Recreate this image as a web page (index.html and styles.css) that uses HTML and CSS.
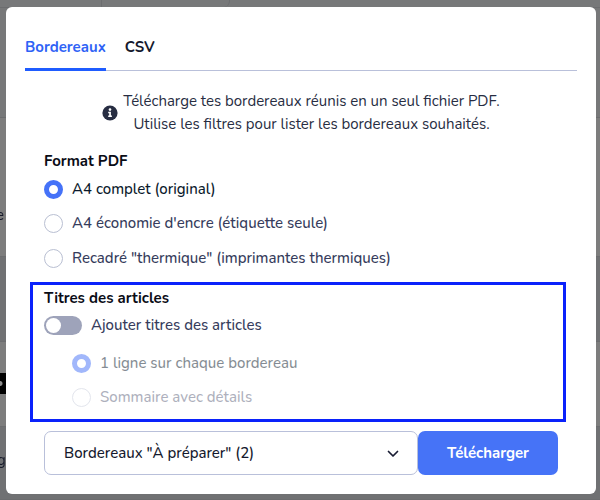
FILE: index.html
```
<!DOCTYPE html>
<html lang="fr">
<head>
    <meta charset="UTF-8">
    <meta name="viewport" content="width=device-width, initial-scale=1.0">
    <title>Bordereaux</title>
    <link rel="stylesheet" href="styles.css">
</head>
<body>
<!-- Dimmed page behind the dialog -->
<div class="backdrop" aria-hidden="true">
    <div class="row row-top"><span class="tab-cell"></span><span class="tab-cell tab-last"></span></div>
    <div class="row row-head"></div>
    <div class="row row-line"></div>
    <div class="row row-item">e</div>
    <div class="row row-alt"></div>
    <div class="row row-tag"><span class="tag"></span></div>
    <div class="row row-alt row-last">g</div>
</div>

<form class="modal" role="dialog" aria-label="Bordereaux">
    <nav class="tabs">
        <a class="tab active" href="#bordereaux">Bordereaux</a>
        <a class="tab" href="#csv">CSV</a>
    </nav>

    <div class="info">
        <svg class="info-icon" viewBox="0 0 16 16" width="16" height="16">
            <circle cx="8" cy="8" r="7.6" fill="#272d42"/>
            <circle cx="8" cy="4.6" r="1.3" fill="#fff"/>
            <path d="M6.2 6.8h2.7v3.7h1v1.5H6.2v-1.5h1V8.3h-1z" fill="#fff"/>
        </svg>
        <p>Télécharge tes bordereaux réunis en un seul fichier PDF.<br>Utilise les filtres pour lister les bordereaux souhaités.</p>
    </div>

    <fieldset class="group">
        <legend>Format PDF</legend>
        <label class="option"><input type="radio" name="format" checked><span>A4 complet (original)</span></label>
        <label class="option"><input type="radio" name="format"><span>A4 économie d'encre (étiquette seule)</span></label>
        <label class="option"><input type="radio" name="format"><span>Recadré "thermique" (imprimantes thermiques)</span></label>
    </fieldset>

    <fieldset class="group highlight">
        <legend>Titres des articles</legend>
        <label class="switch"><input type="checkbox" role="switch"><span>Ajouter titres des articles</span></label>
        <div class="nested">
            <label class="option"><input type="radio" name="titles" checked disabled><span>1 ligne sur chaque bordereau</span></label>
            <label class="option"><input type="radio" name="titles" disabled><span>Sommaire avec détails</span></label>
        </div>
    </fieldset>

    <div class="actions">
        <div class="select">
            <select aria-label="Filtre des bordereaux">
                <option>Bordereaux "À préparer" (2)</option>
            </select>
            <svg class="chevron" viewBox="0 0 12 8" width="12" height="8">
                <path d="M1.5 1.5 6 6l4.500-4.500" fill="none" stroke="#181c33" stroke-width="1.700" stroke-linecap="round" stroke-linejoin="round"/>
            </svg>
        </div>
        <button class="submit" type="submit">Télécharger</button>
    </div>
</form>
</body>
</html>
```
FILE: styles.css
```
html, body {
    height: 100%;
    margin: 0;
}

body {
    box-sizing: border-box;
    padding: 7px 4px 6px 6px;
    font-family: "Nunito", "Noto Sans", sans-serif;
    font-size: 15px;
    line-height: 23px;
    color: #272d42;
    background: #777879;
    overflow: hidden;
}

/* Page behind the dialog */
.backdrop {
    position: fixed;
    inset: 0;
    display: flex;
    flex-direction: column;
    color: #15192a;
}

.row {
    box-sizing: border-box;
    border-bottom: 1px solid #6c6d6f;
    flex: none;
}

.row-top {
    display: flex;
    height: 8px;
}

.tab-cell {
    width: 101px;
    border-right: 1px solid #6c6d6f;
}

.tab-last {
    width: 127px;
    border-bottom-right-radius: 6px;
}

.row-head {
    height: 110px;
}

.row-line {
    height: 56px;
    background: #7d7d7d;
    border-bottom: none;
}

.row-item {
    height: 83px;
    padding-top: 30px;
    background: #7d7d7d;
    text-indent: -4px;
}

.row-alt {
    height: 85px;
    background: #707173;
}

.row-tag {
    height: 85px;
    padding-top: 31px;
    background: #7d7d7d;
}

.tag {
    display: block;
    width: 20px;
    height: 21px;
    background: radial-gradient(circle at 0 50%, #8b8b8b 2px, #000 3px);
}

.row-last {
    flex: 1;
    padding-top: 22px;
    text-indent: -3px;
}

/* Dialog */
.modal {
    position: relative;
    box-sizing: border-box;
    min-height: 100%;
    padding: 24px 19px 19px;
    background: #fff;
    border-radius: 6px;
}

.tabs {
    display: flex;
    gap: 19px;
    border-bottom: 1px solid #b9c0da;
}

.tab {
    padding: 5px 0 9px;
    margin-bottom: -1px;
    border-bottom: 3px solid transparent;
    font-weight: 700;
    color: #15192d;
    text-decoration: none;
}

.tab.active {
    color: #2f63f6;
    border-color: #1f5cff;
}

.info {
    display: flex;
    justify-content: center;
    align-items: center;
    gap: 5px;
    margin: 19px 0 14px;
    text-align: center;
}

.info p {
    margin: 0;
}

.info-icon {
    flex: none;
}

.group {
    margin: 0 19px;
    padding: 0;
    border: none;
}

.group legend {
    padding: 0;
    font-weight: 700;
    color: #0a0c16;
}

.option, .switch {
    display: flex;
    align-items: center;
    gap: 9px;
    font-weight: 500;
    color: #363c5c;
}

.option {
    height: 35px;
}

.option:first-of-type {
    height: 33px;
}

.option:has(input:checked) {
    color: #0b1a2c;
}

.option input {
    appearance: none;
    box-sizing: border-box;
    width: 19px;
    height: 19px;
    margin: 0;
    border: 1px solid #b9bfd2;
    border-radius: 50%;
    background: #fff;
}

.option input:checked {
    border: 5px solid #4572f8;
}

.option:has(input:disabled) {
    opacity: 0.5;
}

.option:has(input:disabled:not(:checked)) {
    opacity: 0.4;
}

/* Framed block, its border sits outside the column */
.highlight {
    margin: 6px 11px 9px 5px;
    padding: 2px 11px 4px;
    border: 3px solid #0a22fb;
}

.highlight legend {
    float: left;
    width: 100%;
}

.switch {
    clear: both;
    height: 31px;
}

.switch input {
    appearance: none;
    display: flex;
    box-sizing: border-box;
    width: 38px;
    height: 19px;
    margin: 0;
    padding: 2px;
    border-radius: 10px;
    background: #9ea3ba;
}

.switch input::before {
    content: "";
    width: 15px;
    height: 15px;
    border-radius: 50%;
    background: #fff;
}

.switch input:checked {
    justify-content: flex-end;
    background: #4572f8;
}

.nested {
    padding: 6px 0 0 28px;
}

/* Filter and download */
.actions {
    display: flex;
    margin: 0 19px;
}

.select {
    position: relative;
    flex: 1;
}

.select select {
    appearance: none;
    box-sizing: border-box;
    width: 100%;
    height: 44px;
    padding: 0 40px 0 19px;
    border: 1px solid #b9c0da;
    border-radius: 7px;
    background: #fff;
    font: inherit;
    font-weight: 500;
    color: #15192d;
}

.chevron {
    position: absolute;
    right: 19px;
    top: 19px;
    pointer-events: none;
}

.submit {
    width: 140px;
    height: 44px;
    padding: 0;
    border: none;
    border-radius: 7px;
    background: #4673f7;
    font: inherit;
    font-weight: 700;
    color: #fff;
}
```
